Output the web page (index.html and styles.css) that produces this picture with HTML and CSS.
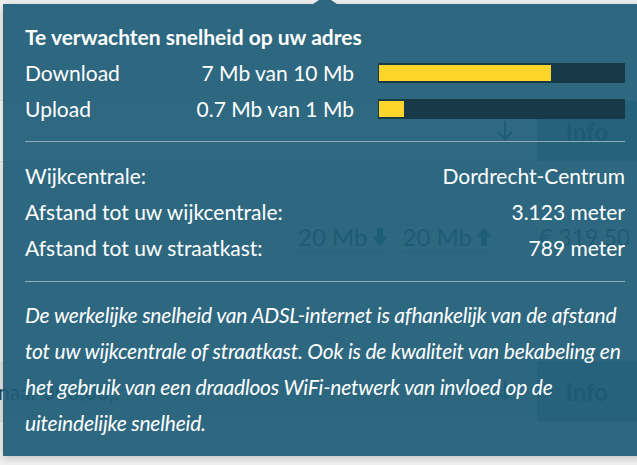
FILE: index.html
```html
<!DOCTYPE html>
<html lang="nl">
<head>
    <meta charset="UTF-8">
    <meta name="viewport" content="width=device-width, initial-scale=1.0">
    <title>Snelheid op uw adres</title>
    <link rel="stylesheet" href="styles.css">
</head>
<body>
    <div class="page">
        <div class="page-head"></div>
        <div class="offer">
            <span class="offer-text"></span>
            <svg class="offer-icon" width="24" height="24" viewBox="0 0 24 24"><path d="M12 2v18M5 13l7 7 7-7" fill="none" stroke="currentColor" stroke-width="2"/></svg>
            <span class="info-btn">Info</span>
        </div>
        <div class="speeds">
            <span class="speed">20 Mb<svg class="arrow" width="16" height="18" viewBox="0 0 16 18"><path d="M5 0h6v9h5l-8 9-8-9h5z" fill="currentColor"/></svg></span>
            <span class="speed">20 Mb<svg class="arrow" width="16" height="18" viewBox="0 0 16 18"><path d="M5 18h6V9h5L8 0 0 9h5z" fill="currentColor"/></svg></span>
            <span class="price">€ 319,50</span>
        </div>
        <div class="offer offer-alt">
            <span class="offer-text">naar 300,00).</span>
            <svg class="offer-icon" width="24" height="24" viewBox="0 0 24 24"><path d="M12 2v18M5 13l7 7 7-7" fill="none" stroke="currentColor" stroke-width="2"/></svg>
            <span class="info-btn">Info</span>
        </div>
    </div>

    <div class="tooltip">
        <h2 class="tip-title">Te verwachten snelheid op uw adres</h2>
        <div class="speed-grid">
            <div class="speed-row"><span>Download</span><span>7 Mb van 10 Mb</span></div>
            <div class="bar"><div class="bar-fill" style="width: 70%"></div></div>
            <div class="speed-row"><span>Upload</span><span>0.7 Mb van 1 Mb</span></div>
            <div class="bar"><div class="bar-fill" style="width: 10%"></div></div>
        </div>
        <hr class="tip-rule">
        <div class="facts">
            <div class="fact"><span>Wijkcentrale:</span><span>Dordrecht-Centrum</span></div>
            <div class="fact"><span>Afstand tot uw wijkcentrale:</span><span>3.123 meter</span></div>
            <div class="fact"><span>Afstand tot uw straatkast:</span><span>789 meter</span></div>
        </div>
        <hr class="tip-rule tip-rule-low">
        <p class="tip-note">De werkelijke snelheid van ADSL-internet is afhankelijk van de afstand tot uw wijkcentrale of straatkast. Ook is de kwaliteit van bekabeling en het gebruik van een draadloos WiFi-netwerk van invloed op de uiteindelijke snelheid.</p>
    </div>
</body>
</html>
```

FILE: styles.css
```css
body {
    margin: 0;
    height: 465px;
    overflow: hidden;
    position: relative;
    font-family: 'Lato', 'Open Sans', sans-serif;
    background-color: #f0f0f0;
    color: #2a4a5a;
}

/* page behind the tooltip */
.page {
    display: flex;
    flex-direction: column;
}
.page-head {
    height: 100px;
    border-bottom: 1px solid #dddddd;
}
.offer {
    display: flex;
    align-items: center;
    height: 60px;
    background-color: #f7f7f7;
    border-bottom: 1px solid #dddddd;
}
.offer-text {
    flex: 1;
    font-size: 21px;
    margin-left: -2px;
    white-space: nowrap;
}
.offer-icon {
    color: #2f6c80;
    margin-right: 20px;
}
.info-btn {
    display: flex;
    align-items: center;
    justify-content: center;
    width: 100px;
    height: 100%;
    background-color: #8ea3ad;
    color: #1d3f50;
    font-size: 24px;
    font-weight: bold;
}
.speeds {
    display: flex;
    align-items: center;
    height: 44px;
    margin: 53px 0 102px;
    padding-left: 298px;
    font-size: 24px;
    white-space: nowrap;
}
.speed {
    display: flex;
    flex-shrink: 0;
    align-items: center;
    gap: 4px;
    margin-right: 15px;
    border-bottom: 1px dotted #2a4a5a;
}
.speed + .speed + .price {
    margin-left: 32px;
}
.arrow {
    color: #2b6e5c;
}
.price {
    flex-shrink: 0;
    font-size: 23px;
}
.offer-alt {
    background-color: #e3e3e3;
}

/* tooltip */
.tooltip {
    position: absolute;
    top: 4px;
    left: 3px;
    width: 600px;
    padding: 15px 22px 15px;
    background-color: rgba(29, 92, 118, 0.92);
    box-shadow: 0 2px 8px rgba(0, 0, 0, 0.2);
    color: #ffffff;
    font-size: 21px;
    line-height: 36px;
}
.tooltip::before {
    content: "";
    position: absolute;
    top: -8px;
    left: 310px;
    border-left: 12px solid transparent;
    border-right: 12px solid transparent;
    border-bottom: 8px solid #2e6880;
}
.tip-title {
    margin: 0;
    font-size: 21px;
    font-weight: bold;
    line-height: 36px;
}
.speed-grid {
    display: grid;
    grid-template-columns: 1fr 247px;
    column-gap: 24px;
    align-items: center;
}
.speed-row {
    display: flex;
    justify-content: space-between;
}
.bar {
    height: 16px;
    padding: 2px 1px;
    background-color: #183a48;
}
.bar-fill {
    height: 100%;
    background-color: #fed52b;
}
.tip-rule {
    margin: 14px 0 16px;
    border: none;
    border-top: 1px solid #8eadba;
}
.tip-rule-low {
    margin: 15px 0;
}
.fact {
    display: flex;
    justify-content: space-between;
}
.tip-note {
    margin: 0 -14px 0 0;
    font-style: italic;
    letter-spacing: -0.2px;
}
```
